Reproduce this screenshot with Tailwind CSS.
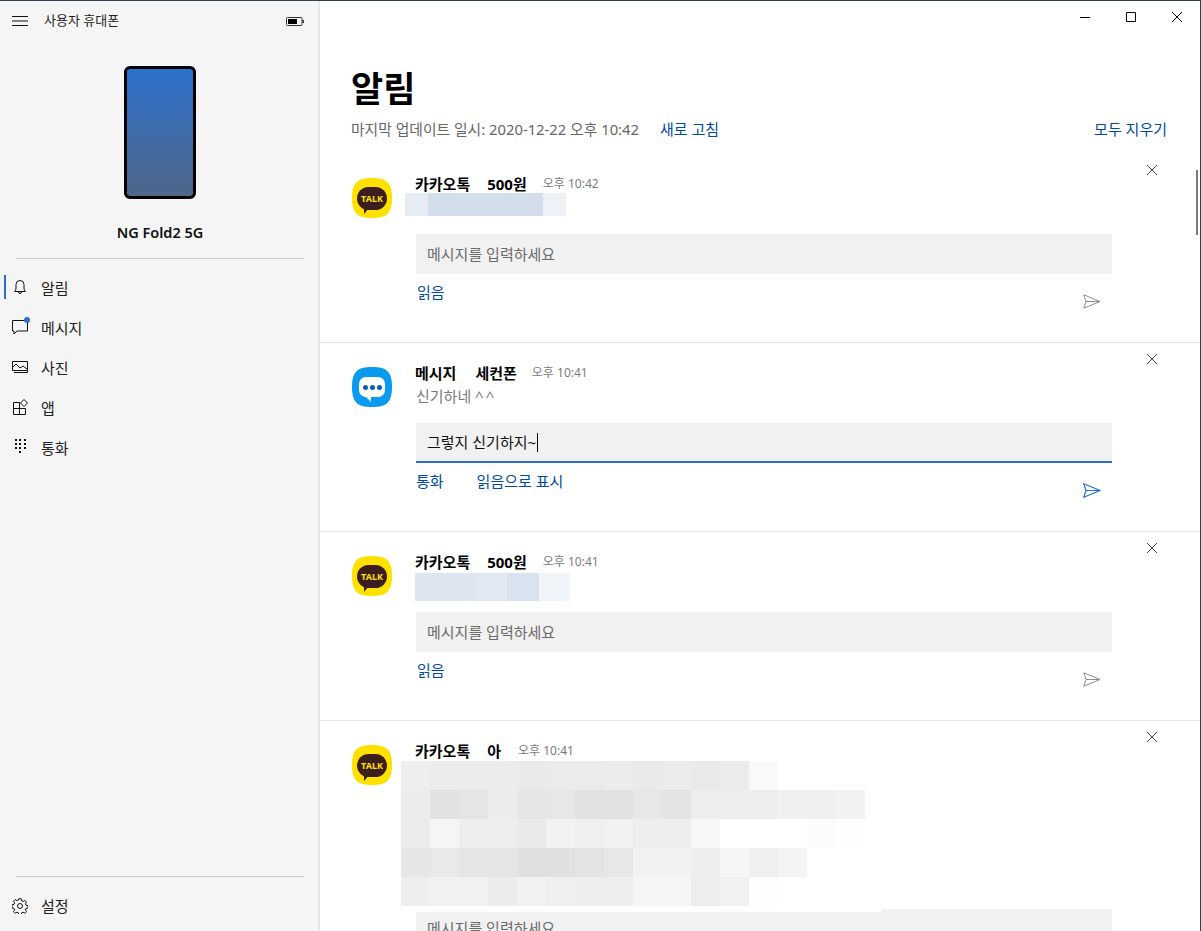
<!DOCTYPE html>
<html lang="ko">
<head>
    <meta charset="UTF-8">
    <title>사용자 휴대폰</title>
    <script src="https://cdn.jsdelivr.net/npm/@tailwindcss/browser@4"></script>
</head>
<body class="bg-white">
<div class="relative w-[1201px] h-[931px] overflow-hidden flex border-t border-r border-[#2b3f57] bg-white text-black font-['Noto_Sans','Noto_Sans_CJK_KR',sans-serif]">

    <!-- sidebar -->
    <aside class="w-[320px] h-full shrink-0 flex flex-col bg-[#f5f5f5] shadow-[inset_-2px_0_0_#e6e6e6]">
        <div class="h-[40px] flex items-center pl-[12px] pr-[16px]">
            <svg class="w-[16px] h-[10px] shrink-0" viewBox="0 0 16 10" fill="none" stroke="#111" stroke-width="1"><path d="M0 .5h16M0 5h16M0 9.500h16"/></svg>
            <span class="ml-[16px] text-[13px] text-[#222] flex-1">사용자 휴대폰</span>
            <svg class="w-[18px] h-[9px]" viewBox="0 0 18 9" fill="none"><rect x=".5" y=".5" width="15.500" height="8" rx="1" stroke="#333"/><rect x="2" y="2" width="9" height="5" fill="#000"/><rect x="16.500" y="3" width="1.500" height="3" fill="#333"/></svg>
        </div>
        <div class="mt-[25px] mx-auto w-[72px] h-[133px] rounded-[6px] border-[3px] border-black bg-gradient-to-b from-[#2a70cd] to-[#4e6688]"></div>
        <div class="mt-[23px] h-[20px] leading-[20px] text-center text-[14.500px] font-semibold text-[#111]">NG Fold2 5G</div>
        <div class="mt-[16px] mx-[16px] h-px bg-[#c8c8c8]"></div>

        <nav class="mt-[8px] flex flex-col">
            <div class="relative h-[40px] flex items-center pl-[12px] text-[15px] text-[#222]">
                <span class="absolute left-[4px] top-[8px] w-[2px] h-[24px] bg-[#2a6fd0]"></span>
                <svg class="w-[16px] h-[16px]" viewBox="0 0 16 16" fill="none" stroke="#111"><path d="M2.500 12.500h11c-1-1-1.500-2-1.500-3.500V5.500a4 4 0 0 0-8 0V9c0 1.500-.5 2.500-1.500 3.500z"/><path d="M6.500 12.500v.5a1.500 1.500 0 0 0 3 0v-.5"/></svg>
                <span class="ml-[13px] pt-[2px]">알림</span>
            </div>
            <div class="h-[40px] flex items-center pl-[12px] text-[15px] text-[#222]">
                <span class="relative w-[16px] h-[16px]">
                    <svg class="w-[16px] h-[16px]" viewBox="0 0 16 16" fill="none" stroke="#111"><path d="M.5 1.500h15v10.500H5l-3 3v-3H.5z"/></svg>
                    <span class="absolute right-[-2px] top-[-2px] w-[6px] h-[6px] rounded-full bg-[#2a6fd0]"></span>
                </span>
                <span class="ml-[13px] pt-[2px]">메시지</span>
            </div>
            <div class="h-[40px] flex items-center pl-[12px] text-[15px] text-[#222]">
                <svg class="w-[16px] h-[16px]" viewBox="0 0 16 16" fill="none" stroke="#111"><path d="M.5 2.500h15v9H.5z"/><path d="M2 13.500h13.500v-2M1 8l3-3 4 4 3-2 4 3"/></svg>
                <span class="ml-[13px] pt-[2px]">사진</span>
            </div>
            <div class="h-[40px] flex items-center pl-[12px] text-[15px] text-[#222]">
                <svg class="w-[16px] h-[16px]" viewBox="0 0 16 16" fill="none" stroke="#111"><path d="M1.500 3.500h6v12h-6zM1.500 9.500h12v6h-6"/><path d="M12 .5l3.500 3.500-3.500 3.500L8.500 4z"/></svg>
                <span class="ml-[13px] pt-[2px]">앱</span>
            </div>
            <div class="h-[40px] flex items-center pl-[12px] text-[15px] text-[#222]">
                <svg class="w-[16px] h-[16px]" viewBox="0 0 16 16" fill="#111"><path d="M3 0h2v2H3zM7 0h2v2H7zM12 0h2v2h-2zM3 4h2v2H3zM7 4h2v2H7zM12 4h2v2h-2zM3 8h2v2H3zM7 8h2v2H7zM12 8h2v2h-2zM7 12h2v2H7z"/></svg>
                <span class="ml-[13px] pt-[2px]">통화</span>
            </div>
        </nav>

        <div class="mt-auto mx-[16px] h-px bg-[#c8c8c8]"></div>
        <div class="mt-[9px] mb-[5px] h-[40px] flex items-center pl-[12px] text-[15px] text-[#222]">
            <svg class="w-[16px] h-[16px]" viewBox="0 0 16 16" fill="none" stroke="#111"><circle cx="8" cy="8" r="2.500"/><path d="M6.800.8h2.400l.4 2 1.500.6 1.700-1.100 1.700 1.700-1.100 1.700.6 1.500 2 .4v2.400l-2 .4-.6 1.500 1.100 1.700-1.700 1.700-1.700-1.100-1.500.6-.4 2H6.800l-.4-2-1.500-.6-1.700 1.100-1.700-1.700 1.100-1.700-.6-1.500-2-.4V6.800l2-.4.6-1.500-1.100-1.700 1.700-1.700 1.700 1.100 1.500-.6z"/></svg>
            <span class="ml-[13px]">설정</span>
        </div>
    </aside>

    <!-- main -->
    <main class="relative flex-1 min-w-0 flex flex-col">
        <div class="absolute top-[11px] right-[18px] flex items-center gap-[36px]">
            <svg class="w-[10px] h-[10px]" viewBox="0 0 10 10" fill="none" stroke="#000"><path d="M0 5.500h10"/></svg>
            <svg class="w-[10px] h-[10px]" viewBox="0 0 10 10" fill="none" stroke="#000"><path d="M.5.500h9v9h-9z"/></svg>
            <svg class="w-[10px] h-[10px]" viewBox="0 0 10 10" fill="none" stroke="#000"><path d="M0 0l10 10M10 0L0 10"/></svg>
        </div>

        <div class="h-[153px] shrink-0 pl-[31px] pr-[33px]">
            <h1 class="pt-[63px] h-[113px] text-[35px] leading-[50px] font-bold">알림</h1>
            <div class="h-[30px] flex items-center text-[15px]">
                <span class="text-[14.800px] text-[#666]">마지막 업데이트 일시: 2020-12-22 오후 10:42</span>
                <span class="ml-[21px] text-[#004a9f]">새로 고침</span>
                <span class="ml-auto text-[#004a9f]">모두 지우기</span>
            </div>
        </div>

        <!-- card 1 -->
        <section class="relative h-[189px] shrink-0 flex pl-[32px] border-b border-[#e6e6e6]">
            <div class="w-[64px] pt-[24px]">
                <div class="relative w-[40px] h-[40px] flex items-center justify-center">
                    <svg class="absolute inset-0 w-[40px] h-[40px]" viewBox="0 0 40 40"><path d="M20 0C35 0 40 5 40 20S35 40 20 40 0 35 0 20 5 0 20 0z" fill="#ffe100"/></svg>
                    <div class="relative w-[30px] h-[23px] rounded-full bg-[#3c1e1e] text-[#ffe100] text-[9px] leading-[23px] text-center font-bold">TALK</div>
                    <span class="absolute left-[12px] bottom-[4px] w-0 h-0 border-t-[6px] border-t-[#3c1e1e] border-r-[5px] border-r-transparent"></span>
                </div>
            </div>
            <div class="w-[696px] pt-[20px]">
                <div class="h-[20px] flex items-center text-[15px] font-bold">
                    <span class="ml-[-1px]">카카오톡</span><span class="ml-[17px]">500원</span>
                    <span class="ml-[16px] text-[12px] font-normal text-[#7a7a7a]">오후 10:42</span>
                </div>
                <div class="ml-[-11px] mt-[-1px] h-[23px] flex">
                    <div class="w-[23px] bg-[#e6ecf4]"></div><div class="w-[115px] bg-[#d3deec]"></div><div class="w-[23px] bg-[#eef1f6]"></div>
                </div>
                <div class="mt-[18px] h-[40px] pl-[11px] flex items-center bg-[#f1f1f1] text-[15px] text-[#6b6b6b]">메시지를 입력하세요</div>
                <div class="h-[36px] flex items-center justify-between pr-[11px] text-[15px] text-[#004a9f]">
                    <span class="pl-[1px]">읽음</span>
                    <svg class="mt-[18px] w-[18px] h-[15px]" viewBox="0 0 18 15" fill="none" stroke="#8c8c8c"><path d="M.8.800L17 7.500.8 14.200 3 7.500zM3 7.500h14"/></svg>
                </div>
            </div>
            <svg class="absolute left-[827px] top-[11px] w-[10px] h-[10px]" viewBox="0 0 10 10" fill="none" stroke="#444"><path d="M0 0l10 10M10 0L0 10"/></svg>
        </section>

        <!-- card 2 -->
        <section class="relative h-[189px] shrink-0 flex pl-[32px] border-b border-[#e6e6e6]">
            <div class="w-[64px] pt-[24px]">
                <div class="relative w-[40px] h-[40px] flex items-center justify-center">
                    <svg class="absolute inset-0 w-[40px] h-[40px]" viewBox="0 0 40 40"><path d="M20 0C35 0 40 5 40 20S35 40 20 40 0 35 0 20 5 0 20 0z" fill="#0a9af0"/></svg>
                    <div class="relative w-[26px] h-[20px] rounded-[7px] bg-white flex items-center justify-center gap-[2px]">
                        <span class="w-[5px] h-[5px] rounded-full bg-[#0b5fb0]"></span><span class="w-[5px] h-[5px] rounded-full bg-[#0b5fb0]"></span><span class="w-[5px] h-[5px] rounded-full bg-[#0b5fb0]"></span>
                    </div>
                    <span class="absolute left-[14px] bottom-[5px] w-0 h-0 border-t-[5px] border-t-white border-l-[5px] border-l-transparent"></span>
                </div>
            </div>
            <div class="w-[696px] pt-[20px]">
                <div class="h-[20px] flex items-center text-[15px] font-bold">
                    <span class="ml-[-1px]">메시지</span><span class="ml-[19px]">세컨폰</span>
                    <span class="ml-[15px] text-[12px] font-normal text-[#7a7a7a]">오후 10:41</span>
                </div>
                <div class="mt-[-1px] h-[23px] leading-[29px] text-[15px] text-[#7a7a7a]">신기하네 <span class="tracking-[2px]">^^</span></div>
                <div class="mt-[18px] h-[40px] pl-[11px] flex items-center bg-[#f1f1f1] border-b-2 border-[#2a6fc4] text-[15px] text-[#111]">그렇지 신기하지~<span class="ml-px w-px h-[19px] bg-black"></span></div>
                <div class="h-[36px] flex items-center pr-[11px] text-[15px] text-[#004a9f]">
                    <span>통화</span><span class="ml-[33px]">읽음으로 표시</span>
                    <svg class="ml-auto mt-[18px] w-[18px] h-[15px]" viewBox="0 0 18 15" fill="none" stroke="#2a6fd0" stroke-width="1.200"><path d="M.8.800L17 7.500.8 14.200 3 7.500zM3 7.500h14"/></svg>
                </div>
            </div>
            <svg class="absolute left-[827px] top-[11px] w-[10px] h-[10px]" viewBox="0 0 10 10" fill="none" stroke="#444"><path d="M0 0l10 10M10 0L0 10"/></svg>
        </section>

        <!-- card 3 -->
        <section class="relative h-[189px] shrink-0 flex pl-[32px] border-b border-[#e6e6e6]">
            <div class="w-[64px] pt-[24px]">
                <div class="relative w-[40px] h-[40px] flex items-center justify-center">
                    <svg class="absolute inset-0 w-[40px] h-[40px]" viewBox="0 0 40 40"><path d="M20 0C35 0 40 5 40 20S35 40 20 40 0 35 0 20 5 0 20 0z" fill="#ffe100"/></svg>
                    <div class="relative w-[30px] h-[23px] rounded-full bg-[#3c1e1e] text-[#ffe100] text-[9px] leading-[23px] text-center font-bold">TALK</div>
                    <span class="absolute left-[12px] bottom-[4px] w-0 h-0 border-t-[6px] border-t-[#3c1e1e] border-r-[5px] border-r-transparent"></span>
                </div>
            </div>
            <div class="w-[696px] pt-[20px]">
                <div class="h-[20px] flex items-center text-[15px] font-bold">
                    <span class="ml-[-1px]">카카오톡</span><span class="ml-[17px]">500원</span>
                    <span class="ml-[16px] text-[12px] font-normal text-[#7a7a7a]">오후 10:41</span>
                </div>
                <div class="ml-[-1px] mt-px h-[28px] flex">
                    <div class="w-[62px] bg-[#dde5f0]"></div><div class="w-[30px] bg-[#e1e8f2]"></div><div class="w-[32px] bg-[#d9e3ef]"></div><div class="w-[31px] bg-[#f1f4f9]"></div>
                </div>
                <div class="mt-[11px] h-[40px] pl-[11px] flex items-center bg-[#f1f1f1] text-[15px] text-[#6b6b6b]">메시지를 입력하세요</div>
                <div class="h-[36px] flex items-center justify-between pr-[11px] text-[15px] text-[#004a9f]">
                    <span class="pl-[1px]">읽음</span>
                    <svg class="mt-[18px] w-[18px] h-[15px]" viewBox="0 0 18 15" fill="none" stroke="#8c8c8c"><path d="M.8.800L17 7.500.8 14.200 3 7.500zM3 7.500h14"/></svg>
                </div>
            </div>
            <svg class="absolute left-[827px] top-[11px] w-[10px] h-[10px]" viewBox="0 0 10 10" fill="none" stroke="#444"><path d="M0 0l10 10M10 0L0 10"/></svg>
        </section>

        <!-- card 4, runs off the bottom -->
        <section class="relative h-[189px] shrink-0 flex pl-[32px]">
            <div class="w-[64px] pt-[24px]">
                <div class="relative w-[40px] h-[40px] flex items-center justify-center">
                    <svg class="absolute inset-0 w-[40px] h-[40px]" viewBox="0 0 40 40"><path d="M20 0C35 0 40 5 40 20S35 40 20 40 0 35 0 20 5 0 20 0z" fill="#ffe100"/></svg>
                    <div class="relative w-[30px] h-[23px] rounded-full bg-[#3c1e1e] text-[#ffe100] text-[9px] leading-[23px] text-center font-bold">TALK</div>
                    <span class="absolute left-[12px] bottom-[4px] w-0 h-0 border-t-[6px] border-t-[#3c1e1e] border-r-[5px] border-r-transparent"></span>
                </div>
            </div>
            <div class="w-[696px] pt-[20px]">
                <div class="h-[20px] flex items-center text-[15px] font-bold">
                    <span class="ml-[-1px]">카카오톡</span><span class="ml-[17px]">아</span>
                    <span class="ml-[17px] text-[12px] font-normal text-[#7a7a7a]">오후 10:41</span>
                </div>
                <div id="blur" class="ml-[-15px] w-[464px] grid grid-cols-[repeat(16,29px)] auto-rows-[29px]"></div>
                <div class="relative mt-[3px] h-[40px] pl-[11px] pb-[2px] flex items-center bg-[#f1f1f1] text-[15px] text-[#6b6b6b]">
                    <span class="absolute left-0 top-0 w-[465px] h-[3px] bg-white"></span>
                    메시지를 입력하세요
                </div>
            </div>
            <svg class="absolute left-[827px] top-[11px] w-[10px] h-[10px]" viewBox="0 0 10 10" fill="none" stroke="#444"><path d="M0 0l10 10M10 0L0 10"/></svg>
        </section>

        <div class="absolute right-[2px] top-[169px] w-[2px] h-[65px] bg-[#7a7a7a]"></div>
    </main>
</div>

<script>
    // blurred text from the screenshot, cell by cell
    const filas = [
        ['ee','ec','ec','ec','ea','eb','eb','ec','ea','ec','ea','ec','f9','ff','ff','ff'],
        ['ec','e2','e5','ec','e6','e7','e1','e1','e7','e4','ed','ee','ee','f0','ef','f2'],
        ['ec','f5','ee','ee','ea','f2','f0','f1','ee','ee','f7','ff','ff','ff','fc','fe'],
        ['e6','e9','e5','e5','e0','e0','e4','e7','f2','f2','ee','f6','ef','f4','ff','ff'],
        ['ee','f1','f1','ec','f2','ef','ee','ee','f5','f5','ed','f1','fd','ff','ff','ff']
    ];
    const blur = document.getElementById('blur');
    filas.forEach(fila => {
        fila.forEach(c => {
            const celda = document.createElement('div');
            celda.style.background = '#' + c + c + c;
            blur.appendChild(celda);
        });
    });
</script>
</body>
</html>
